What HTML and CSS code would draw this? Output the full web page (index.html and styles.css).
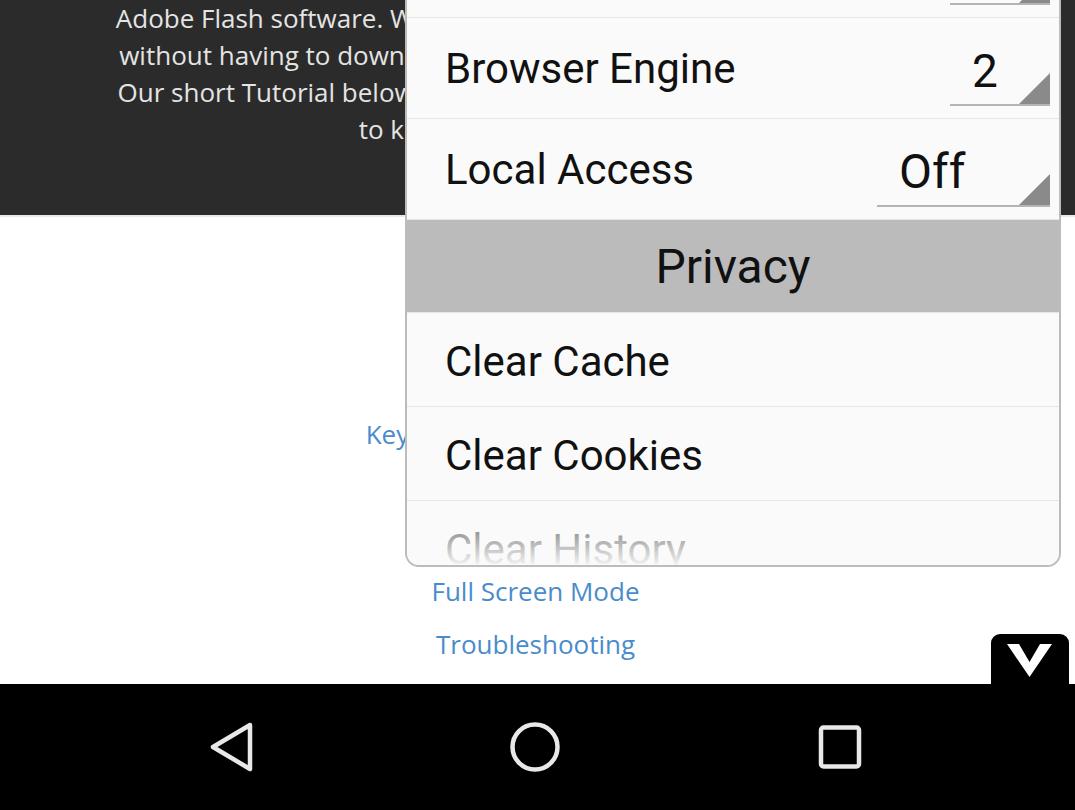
FILE: index.html
```html
<!DOCTYPE html>
<html>
<head>
<meta charset="utf-8">
<link rel="stylesheet" href="styles.css">
</head>
<body>
<div class="screen">
  <div class="page">
    <section class="banner">
      <p class="intro">
        <span>Adobe Flash software. We let you play the games made for Flash now.</span>
        <span>without having to download any plugins or extra software on your PC</span>
        <span>Our short Tutorial below explains all the important features you need</span>
        <span>to know to get started quickly</span>
      </p>
    </section>
    <nav class="links">
      <a href="#">Controls</a>
      <a href="#">Keyboard &amp; Mouse Controls</a>
      <a href="#">Save States</a>
      <a href="#">Settings</a>
      <a href="#">Full Screen Mode</a>
      <a href="#">Troubleshooting</a>
    </nav>
  </div>

  <div class="popup">
    <div class="row">
      <span class="label">Quality</span>
      <span class="select sel-narrow">1</span>
    </div>
    <div class="row">
      <span class="label">Browser Engine</span>
      <span class="select sel-narrow">2</span>
    </div>
    <div class="row">
      <span class="label">Local Access</span>
      <span class="select sel-wide">Off</span>
    </div>
    <div class="header">Privacy</div>
    <div class="row">
      <span class="label">Clear Cache</span>
    </div>
    <div class="row">
      <span class="label">Clear Cookies</span>
    </div>
    <div class="row">
      <span class="label">Clear History</span>
    </div>
    <div class="fade"></div>
  </div>

  <button class="toggle" aria-label="Hide">
    <svg width="46" height="34" viewBox="0 0 46 34"><polygon points="0,0 12,0 22.5,18 33,0 45,0 22.5,33" fill="#fff"/></svg>
  </button>

  <footer class="navbar">
    <svg class="nav-icon" width="48" height="52" viewBox="0 0 48 52"><polygon points="42,4 5,26 42,48" fill="none" stroke="#e8e8e8" stroke-width="4.5" stroke-linejoin="round"/></svg>
    <svg class="nav-icon" width="52" height="52" viewBox="0 0 52 52"><circle cx="26" cy="26" r="22.5" fill="none" stroke="#e8e8e8" stroke-width="4.5"/></svg>
    <svg class="nav-icon" width="48" height="48" viewBox="0 0 48 48"><rect x="5" y="4.5" width="38" height="39" rx="2.5" fill="none" stroke="#e8e8e8" stroke-width="4.5"/></svg>
  </footer>
</div>
</body>
</html>
```

FILE: styles.css
```css
* { box-sizing: border-box; }
html, body { margin: 0; padding: 0; }
body { width: 1075px; height: 810px; overflow: hidden; background: #fff; }

.screen {
  position: relative;
  width: 1075px;
  height: 810px;
  overflow: hidden;
  display: flex;
  flex-direction: column;
  font-family: "Open Sans", "Liberation Sans", sans-serif;
}

.page {
  flex: 1;
  display: flex;
  flex-direction: column;
  overflow: hidden;
}

.banner {
  height: 217px;
  background: #2b2b2b;
  border-bottom: 2px solid #e9e9e9;
  flex: none;
}
.intro {
  margin: 0;
  text-align: center;
  color: #e4e4e4;
  font-size: 26px;
  line-height: 37px;
}
.intro span { display: block; white-space: nowrap; }

.links {
  display: flex;
  flex-direction: column;
  align-items: center;
  padding-top: 138px;
  padding-right: 4px;
}
.links a {
  display: block;
  color: #4a8ccb;
  text-decoration: none;
  font-size: 26px;
  line-height: 52.5px;
  white-space: nowrap;
}

.popup {
  position: absolute;
  left: 405px;
  top: -83px;
  width: 656px;
  height: 650px;
  background: #fafafa;
  border: 2px solid #bcbcbc;
  border-top: none;
  border-radius: 0 0 14px 14px;
  overflow: hidden;
  font-family: Roboto, "Noto Sans", sans-serif;
  color: #111;
}
.row {
  height: 101px;
  display: flex;
  align-items: center;
  justify-content: space-between;
  padding: 0 9px 0 38px;
  border-bottom: 1px solid #e6e6e6;
  font-size: 42px;
}
.row:nth-of-type(n+4) { height: 94px; padding-top: 4px; }
.label { white-space: nowrap; }

.select {
  position: relative;
  align-self: flex-end;
  margin-bottom: 12px;
  height: 60px;
  padding-left: 22px;
  border-bottom: 2px solid #b4b4b4;
  font-size: 46px;
  line-height: 50px;
}
.select::after {
  content: "";
  position: absolute;
  right: 0;
  bottom: 0;
  width: 31px;
  height: 31px;
  background: #8a8a8a;
  clip-path: polygon(100% 0, 100% 100%, 0 100%);
}
.sel-narrow { width: 100px; }
.sel-wide { width: 173px; font-size: 48px; }

.header {
  height: 93px;
  background: #bbbbbb;
  display: flex;
  align-items: center;
  justify-content: center;
  font-size: 48px;
  color: #111;
  border-bottom: 1px solid #e6e6e6;
}

.fade {
  position: absolute;
  left: 0;
  right: 0;
  bottom: 0;
  height: 48px;
  background: linear-gradient(rgba(250,250,250,0.4), rgba(250,250,250,0.97));
}

.toggle {
  position: absolute;
  left: 991px;
  top: 634px;
  width: 78px;
  height: 50px;
  border: none;
  padding: 10px 0 0;
  background: #000;
  border-radius: 9px 9px 0 0;
  display: flex;
  justify-content: center;
  align-items: flex-start;
}

.navbar {
  flex: none;
  height: 126px;
  background: #000;
  display: flex;
  align-items: center;
  padding-left: 208px;
}
.navbar .nav-icon:nth-child(1) { margin-right: 253px; }
.navbar .nav-icon:nth-child(2) { margin-right: 255px; }
```
